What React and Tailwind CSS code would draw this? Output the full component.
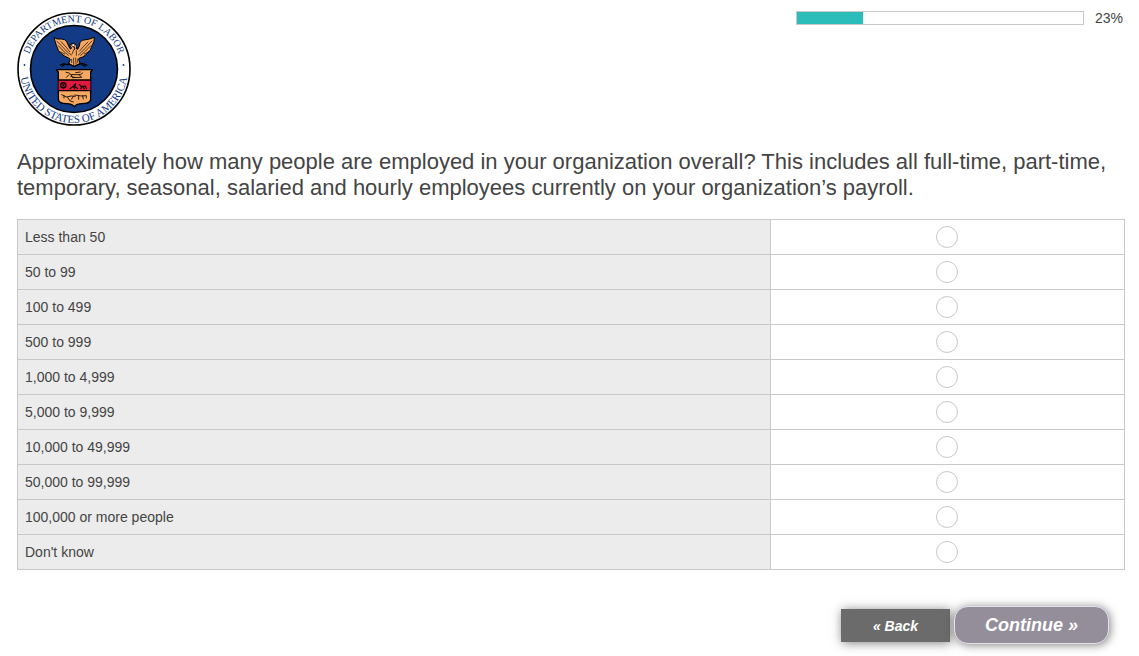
import React, { useState } from "react";

const OPTIONS = [
  "Less than 50",
  "50 to 99",
  "100 to 499",
  "500 to 999",
  "1,000 to 4,999",
  "5,000 to 9,999",
  "10,000 to 49,999",
  "50,000 to 99,999",
  "100,000 or more people",
  "Don't know",
];

function Seal() {
  return (
    <svg
      viewBox="0 0 114 114"
      className="size-[114px] shrink-0"
      role="img"
      aria-label="Department of Labor, United States of America"
    >
      <defs>
        <path id="seal-top" d="M10 57A47 47 0 0 1 104 57" />
        <path id="seal-bottom" d="M3 57A54 54 0 0 0 111 57" />
      </defs>
      <circle cx="57" cy="57" r="56" fill="#fff" stroke="#000" strokeWidth="1.6" />
      <circle cx="57" cy="57" r="43.500" fill="#123a85" stroke="#000" strokeWidth="1.6" />

      {/* ring lettering */}
      <g fill="#123a85" textAnchor="middle" className="font-['Liberation_Serif',serif]">
        <text fontSize="10">
          <textPath href="#seal-top" startOffset="50%">DEPARTMENT OF LABOR</textPath>
        </text>
        <text fontSize="11">
          <textPath href="#seal-bottom" startOffset="50%">UNITED STATES OF AMERICA</textPath>
        </text>
      </g>
      <circle cx="7.500" cy="53" r="0.9" fill="#123a85" />
      <circle cx="106.500" cy="53" r="0.9" fill="#123a85" />

      <g transform="translate(27 18) scale(.3333)" stroke="#000" strokeLinejoin="round" strokeLinecap="round">
        {/* eagle */}
        <path
          d="M31 23 40 27 52 27 62 29 69 36 73 46 78 56 81 57 82 52 77 48 82 41 91 40 98 46 98 57 101 58 106 48 108 38 114 31 126 29 137 27 151 22 150 34 146 43 142 52 139 60 132 67 125 75 116 81 105 85 104 88 108 100 101 104 94 109 88 109 80 104 74 100 79 88 74 84 63 79 54 73 48 67 43 61 40 53 37 46 34 36Z"
          fill="#f6a862"
          strokeWidth="3"
        />
        <path
          d="M39 34 55 50 70 66 82 75M43 47 58 63 73 76M51 35 66 51 77 65M50 66 62 72M144 33 128 50 113 66 103 75M140 47 125 63 110 76M132 36 117 51 107 63M133 66 121 72M89 60 84 72M97 62 97 76M83 88V98M89 84V104M95 84 96 103M101 87V98"
          fill="none"
          strokeWidth="2"
        />
        <path d="M82 44 88 41 94 46 89 50Z" fill="#fff" strokeWidth="2" />
        <path d="M88 50 93 54 91 59" fill="none" strokeWidth="3" />
        {/* branch and arrows in the talons */}
        <path d="M49 105 59 101 70 104 78 103 74 99M54 109 61 104M105 103 115 100 129 106M114 104 124 109M80 104 91 109 103 104" fill="none" strokeWidth="3.500" />

        {/* shield */}
        <path d="M37 119H145L140 126V208C139 217 127 221 114 221 103 221 96 224 91 230 86 224 78 221 68 221 54 221 43 217 43 208V126Z" fill="#f6a862" strokeWidth="4" />
        <path d="M44 150H139V182H44Z" fill="#e3183f" stroke="none" />
        <path d="M43 150H140M43 182H140" fill="none" strokeWidth="4" />
        {/* plough, wheel and anvil, lever */}
        <path d="M66 127 76 129 80 134H109L116 129M75 134 67 142M85 134 80 139 91 142M105 134 113 142 85 143M95 128 109 126" fill="none" strokeWidth="2.500" />
        <circle cx="58" cy="166" r="8" fill="none" strokeWidth="3.500" />
        <path d="M51 161 65 171M65 161 51 171M58 157V176" fill="none" strokeWidth="2" />
        <path d="M78 176 88 169 95 161 92 169 101 176M88 169 92 176M106 163 112 170 111 176M112 170 124 168 127 176M116 170 121 176" fill="none" strokeWidth="3.500" />
        <path d="M53 194 67 201 81 198 94 199M60 197V204M71 202 77 212 88 216M89 198 82 208M93 195 112 198 127 197V204M104 199V208M116 198 118 207" fill="none" strokeWidth="2.500" />
      </g>
    </svg>
  );
}

function Progress({ value }) {
  return (
    <div className="flex items-center gap-[11px] pr-0.5 text-sm leading-4">
      <div
        role="progressbar"
        aria-label="Survey progress"
        aria-valuenow={value}
        aria-valuemin={0}
        aria-valuemax={100}
        className="h-3.5 w-72 border border-[#c8c8c8] bg-white"
      >
        <div className="h-full bg-[#2bbdb9]" style={{ width: `${value}%` }} />
      </div>
      <span>{value}%</span>
    </div>
  );
}

function App() {
  const [answer, setAnswer] = useState("");

  return (
    <main className="bg-white pt-2.5 pr-3.5 pb-3 pl-[17px] font-['Liberation_Sans',Arial,sans-serif] text-[#444]">
      <header className="flex items-start justify-between pb-5">
        <div className="pt-0.5">
          <Seal />
        </div>
        <Progress value={23} />
      </header>

      <form onSubmit={(e) => e.preventDefault()}>
        <h1 id="question" className="pt-[3px] text-[22px] leading-[26px]">
          Approximately how many people are employed in your organization overall? This includes all
          full-time, part-time, temporary, seasonal, salaried and hourly employees currently on your
          organization’s payroll.
        </h1>

        <table aria-labelledby="question" className="mt-[18px] w-full table-fixed border-collapse text-sm">
          <colgroup>
            <col className="w-[68%]" />
            <col />
          </colgroup>
          <tbody>
            {OPTIONS.map((option, i) => (
              <tr key={option} className="h-[35px]">
                <th scope="row" className="border border-[#c8c8c8] bg-[#ececec] p-0 text-left font-normal">
                  <label htmlFor={`size-${i}`} className="block px-[7px] leading-5">
                    {option}
                  </label>
                </th>
                <td className="border border-[#c8c8c8] p-0">
                  <input
                    type="radio"
                    id={`size-${i}`}
                    name="size"
                    value={option}
                    checked={answer === option}
                    onChange={() => setAnswer(option)}
                    className="mx-auto block size-[22px] appearance-none rounded-full border border-[#c8c8c8] bg-white checked:border-[6px] checked:border-[#2bbdb9]"
                  />
                </td>
              </tr>
            ))}
          </tbody>
        </table>

        <div className="mt-9 flex items-center justify-end gap-1 pr-4 font-bold text-white italic">
          <button
            type="button"
            className="h-[33px] w-[109px] bg-[#6b6b6b] pt-0.5 text-sm shadow-[1px_1px_10px_rgba(0,0,0,0.5)]"
          >
            « Back
          </button>
          <button
            type="submit"
            className="h-[38px] w-[155px] rounded-[14px] border border-[#e4e2e6] bg-[#948d9a] text-lg shadow-[1px_1px_10px_rgba(0,0,0,0.5)]"
          >
            Continue »
          </button>
        </div>
      </form>
    </main>
  );
}

export default App;
